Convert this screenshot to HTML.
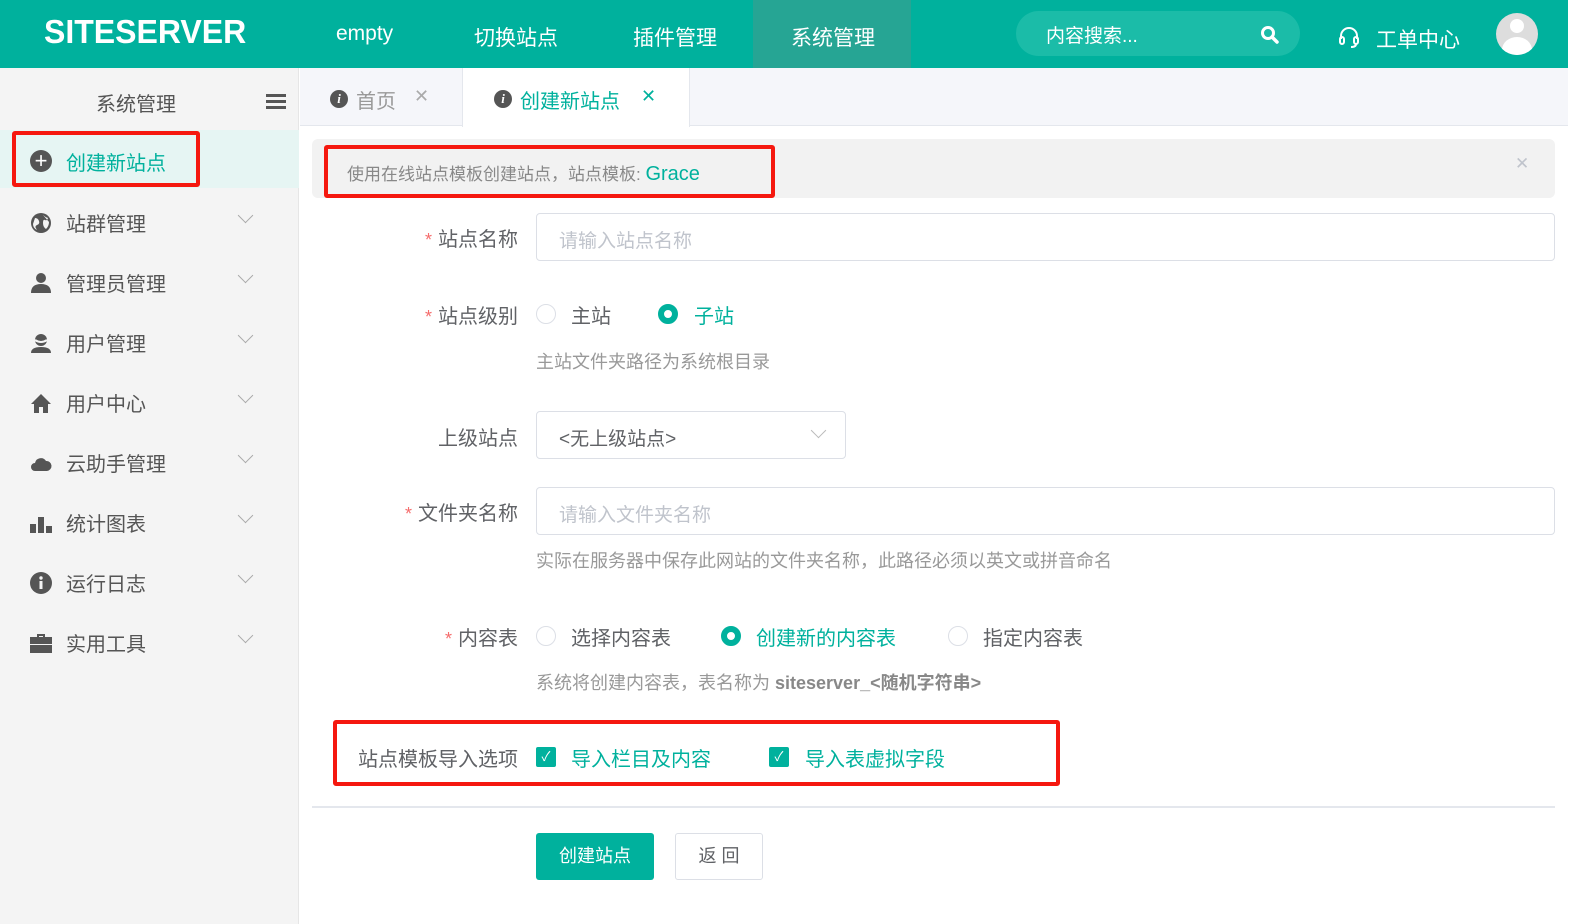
<!DOCTYPE html>
<html><head><meta charset="utf-8"><style>
*{margin:0;padding:0;box-sizing:border-box}
body{width:1575px;height:924px;overflow:hidden;background:#fff;font-family:"Liberation Sans","Noto Sans CJK SC",sans-serif;position:relative;color:#606266}
.a{position:absolute;white-space:nowrap}
.hd{left:0;top:0;width:1568px;height:68px;background:#00b19d}
.nav{color:#fff;font-size:21px;top:22px}
.side{left:0;top:68px;width:299px;height:856px;background:#f4f4f4;border-right:1px solid #e6e6e6}
.mi{left:30px;font-size:20px;color:#555;display:flex;align-items:center}
.mi svg{width:22px;height:22px;margin-right:14px;fill:#555}
.chev{left:240px;width:11px;height:11px;border-right:1.5px solid #aaa;border-bottom:1.5px solid #aaa;transform:rotate(45deg)}
.lbl{font-size:20px;color:#606266;text-align:right;width:200px}
.lbl b{color:#f56c6c;font-weight:normal;font-size:18px;margin-right:6px}
.inp{border:1px solid #dcdfe6;border-radius:4px;height:48px;background:#fff;font-size:19px;color:#c0c4cc;padding:12px 22px}
.tip{font-size:18px;color:#999}
.rd{width:20px;height:20px;border-radius:50%;border:1px solid #dcdfe6;background:#fff}
.rd.on{border:6px solid #00b19d}
.rt{font-size:20px;color:#606266}
.red{border:4px solid #f5180f;border-radius:3px}
.cb{width:20px;height:20px;background:#00b19d;border-radius:2px;color:#fff;font-size:13px;text-align:center;line-height:20px}
.gr{color:#00b19d}
</style></head><body>
<div class="a hd"></div>
<div class="a" style="left:44px;top:13px;color:#fff;font-size:33px;font-weight:bold;transform:scaleX(0.97);transform-origin:left">SITESERVER</div>
<div class="a nav" style="left:336px">empty</div>
<div class="a nav" style="left:474px">切换站点</div>
<div class="a nav" style="left:633px">插件管理</div>
<div class="a" style="left:753px;top:0;width:158px;height:68px;background:#26a594"></div>
<div class="a nav" style="left:791px">系统管理</div>
<div class="a" style="left:1016px;top:11px;width:284px;height:45px;border-radius:23px;background:#1bbca8"></div>
<div class="a" style="left:1046px;top:21px;color:#fff;font-size:19px">内容搜索...</div>
<svg class="a" style="left:1260px;top:25px" width="20" height="20" viewBox="0 0 20 20"><circle cx="8" cy="8" r="5.5" fill="none" stroke="#fff" stroke-width="3"/><path d="M12 12l5 5" stroke="#fff" stroke-width="3.5" stroke-linecap="round"/></svg>
<svg class="a" style="left:1337px;top:25px" width="24" height="24" viewBox="0 0 24 24" fill="none" stroke="#fff" stroke-width="2"><path d="M4 14v-3a8 8 0 0116 0v3"/><rect x="3" y="12" width="4" height="7" rx="2"/><rect x="17" y="12" width="4" height="7" rx="2"/><path d="M19 19q0 3-5 3"/></svg>
<div class="a nav" style="left:1376px;top:24px">工单中心</div>
<div class="a" style="left:1496px;top:13px;width:42px;height:42px;border-radius:50%;background:#ddd;overflow:hidden"><div class="a" style="left:14px;top:6px;width:14px;height:14px;border-radius:50%;background:#fff"></div><div class="a" style="left:6px;top:24px;width:30px;height:26px;border-radius:50%;background:#fff"></div></div>

<div class="a side"></div>
<div class="a" style="left:96px;top:88px;font-size:20px;color:#555">系统管理</div>
<div class="a" style="left:266px;top:94px;width:20px;height:3px;background:#555;box-shadow:0 6px 0 #555,0 12px 0 #555"></div>
<div class="a" style="left:0;top:130px;width:299px;height:58px;background:#e6f5f3"></div>
<div class="a red" style="left:12px;top:131px;width:188px;height:56px"></div>
<div class="a" style="left:30px;top:150px;width:22px;height:22px;border-radius:50%;background:#555;color:#fff;font-size:22px;line-height:21px;text-align:center">+</div>
<div class="a" style="left:66px;top:147px;font-size:20px;color:#00b19d">创建新站点</div>

<div class="a mi" style="top:208px"><svg viewBox="0 0 22 22"><circle cx="11" cy="11" r="10"/><path d="M5 6q3 0 4 3t-2 4 0 5q-4-2-4-6zM13 3q2 2 5 3-1 3-3 2t-2 3 3 6q3-3 3-7" fill="#f4f4f4"/></svg>站群管理</div>
<div class="a mi" style="top:268px"><svg viewBox="0 0 22 22"><circle cx="11" cy="6" r="5"/><path d="M1 21q0-9 10-9t10 9z"/></svg>管理员管理</div>
<div class="a mi" style="top:328px"><svg viewBox="0 0 22 22"><circle cx="11" cy="8" r="6"/><path d="M5 8q6 4 12 0" fill="none" stroke="#f4f4f4" stroke-width="2"/><path d="M1 21q0-6 10-6t10 6z"/></svg>用户管理</div>
<div class="a mi" style="top:388px"><svg viewBox="0 0 22 22"><path d="M11 2L1 12h3v9h5v-6h4v6h5v-9h3z"/></svg>用户中心</div>
<div class="a mi" style="top:448px"><svg viewBox="0 0 22 22"><path d="M5 19a4 4 0 010-8 6 6 0 0111-2 5 5 0 011 10z"/></svg>云助手管理</div>
<div class="a mi" style="top:508px"><svg viewBox="0 0 22 22"><rect x="0" y="12" width="6" height="9"/><rect x="8" y="5" width="6" height="16"/><rect x="16" y="14" width="6" height="7"/></svg>统计图表</div>
<div class="a mi" style="top:568px"><svg viewBox="0 0 22 22"><circle cx="11" cy="11" r="11"/><rect x="9.5" y="9" width="3" height="8" fill="#f4f4f4"/><circle cx="11" cy="6" r="1.7" fill="#f4f4f4"/></svg>运行日志</div>
<div class="a mi" style="top:628px"><svg viewBox="0 0 22 22"><path d="M7 5V2h8v3h-2V4H9v1z"/><rect x="0" y="5" width="22" height="7"/><rect x="0" y="13" width="22" height="8"/></svg>实用工具</div>
<div class="a chev" style="top:210px"></div><div class="a chev" style="top:270px"></div><div class="a chev" style="top:330px"></div><div class="a chev" style="top:390px"></div><div class="a chev" style="top:450px"></div><div class="a chev" style="top:510px"></div><div class="a chev" style="top:570px"></div><div class="a chev" style="top:630px"></div>

<div class="a" style="left:300px;top:68px;width:1268px;height:58px;background:#f5f6fa;border-bottom:1px solid #e4e7ed"></div>
<div class="a" style="left:462px;top:68px;width:228px;height:59px;background:#fff;border-left:1px solid #e4e7ed;border-right:1px solid #e4e7ed"></div>
<div class="a" style="left:330px;top:90px;width:18px;height:18px;border-radius:50%;background:#555;color:#fff;font:italic bold 13px 'Liberation Serif',serif;text-align:center;line-height:18px">i</div>
<div class="a" style="left:356px;top:85px;font-size:20px;color:#999">首页</div>
<div class="a" style="left:414px;top:86px;font-size:18px;color:#aaa">✕</div>
<div class="a" style="left:494px;top:90px;width:18px;height:18px;border-radius:50%;background:#555;color:#fff;font:italic bold 13px 'Liberation Serif',serif;text-align:center;line-height:18px">i</div>
<div class="a" style="left:520px;top:85px;font-size:20px;color:#00b19d">创建新站点</div>
<div class="a" style="left:641px;top:86px;font-size:18px;color:#00b19d">✕</div>

<div class="a" style="left:312px;top:139px;width:1243px;height:59px;background:#f2f2f2;border-radius:6px"></div>
<div class="a red" style="left:324px;top:145px;width:451px;height:53px"></div>
<div class="a" style="left:347px;top:160px;font-size:17px;color:#888">使用在线站点模板创建站点，站点模板: <span class="gr" style="font-size:20px">Grace</span></div>
<div class="a" style="left:1515px;top:154px;font-size:17px;color:#c0c4cc">✕</div>

<div class="a lbl" style="left:318px;top:223px"><b>*</b>站点名称</div>
<div class="a inp" style="left:536px;top:213px;width:1019px">请输入站点名称</div>
<div class="a lbl" style="left:318px;top:300px"><b>*</b>站点级别</div>
<div class="a rd" style="left:536px;top:304px"></div><div class="a rt" style="left:571px;top:300px">主站</div>
<div class="a rd on" style="left:658px;top:304px"></div><div class="a rt gr" style="left:694px;top:300px">子站</div>
<div class="a tip" style="left:536px;top:348px">主站文件夹路径为系统根目录</div>
<div class="a lbl" style="left:318px;top:422px">上级站点</div>
<div class="a inp" style="left:536px;top:411px;width:310px;color:#606266">&lt;无上级站点&gt;</div>
<div class="a" style="left:813px;top:425px;width:11px;height:11px;border-right:1.5px solid #bbb;border-bottom:1.5px solid #bbb;transform:rotate(45deg)"></div>
<div class="a lbl" style="left:318px;top:497px"><b>*</b>文件夹名称</div>
<div class="a inp" style="left:536px;top:487px;width:1019px">请输入文件夹名称</div>
<div class="a tip" style="left:536px;top:547px">实际在服务器中保存此网站的文件夹名称，此路径必须以英文或拼音命名</div>
<div class="a lbl" style="left:318px;top:622px"><b>*</b>内容表</div>
<div class="a rd" style="left:536px;top:626px"></div><div class="a rt" style="left:571px;top:622px">选择内容表</div>
<div class="a rd on" style="left:721px;top:626px"></div><div class="a rt gr" style="left:756px;top:622px">创建新的内容表</div>
<div class="a rd" style="left:948px;top:626px"></div><div class="a rt" style="left:983px;top:622px">指定内容表</div>
<div class="a tip" style="left:536px;top:669px">系统将创建内容表，表名称为 <b style="color:#888">siteserver_&lt;随机字符串&gt;</b></div>
<div class="a red" style="left:333px;top:720px;width:727px;height:66px"></div>
<div class="a lbl" style="left:318px;top:743px">站点模板导入选项</div>
<div class="a cb" style="left:536px;top:747px">✓</div><div class="a rt gr" style="left:571px;top:743px">导入栏目及内容</div>
<div class="a cb" style="left:769px;top:747px">✓</div><div class="a rt gr" style="left:805px;top:743px">导入表虚拟字段</div>
<div class="a" style="left:312px;top:806px;width:1243px;height:2px;background:#e4e7ed"></div>
<div class="a" style="left:536px;top:833px;width:118px;height:47px;background:#00b19d;border-radius:3px;color:#fff;font-size:18px;text-align:center;line-height:47px">创建站点</div>
<div class="a" style="left:675px;top:833px;width:88px;height:47px;border:1px solid #dcdfe6;border-radius:3px;color:#606266;font-size:18px;text-align:center;line-height:45px">返 回</div>
</body></html>
